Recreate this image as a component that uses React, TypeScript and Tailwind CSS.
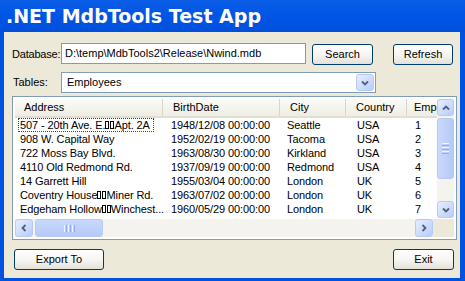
import React from "react";

type Dir = "up" | "down" | "left" | "right";

const chevronPaths: Record<Dir, string> = {
  up: "M2 6.5 L5 3.5 L8 6.5",
  down: "M2 3.5 L5 6.5 L8 3.5",
  left: "M6.5 2 L3.5 5 L6.5 8",
  right: "M3.5 2 L6.5 5 L3.5 8",
};

const Chevron = ({ dir }: { dir: Dir }) => (
  <svg width="10" height="10" viewBox="0 0 10 10">
    <path d={chevronPaths[dir]} fill="none" stroke="#4D6185" strokeWidth="1.8" />
  </svg>
);

const ScrollBtn = ({ dir, className = "" }: { dir: Dir; className?: string }) => (
  <div
    className={`flex items-center justify-center rounded-[3px] border border-[#B7CAF3] bg-linear-to-br from-[#E6EEFE] to-[#BACDF8] ${className}`}
  >
    <Chevron dir={dir} />
  </div>
);

const XpButton = ({ label, className = "" }: { label: string; className?: string }) => (
  <div
    className={`h-[21px] flex items-center justify-center rounded-[3px] border border-[#003C74] bg-linear-to-b from-white via-[#F7F6F2] to-[#E3E1D9] text-[11px] text-black ${className}`}
  >
    {label}
  </div>
);

// CR/LF shown as empty boxes by the list view
const Crlf = () => (
  <span className="inline-flex gap-[1px] align-[-1px]">
    <span className="inline-block w-[4px] h-[8px] border border-black" />
    <span className="inline-block w-[4px] h-[8px] border border-black" />
  </span>
);

const columns = [
  { name: "Address", w: "w-[148px]", hp: "pl-[9px]", dp: "pl-[5px]" },
  { name: "BirthDate", w: "w-[117px]", hp: "pl-[10px]", dp: "pl-[8px]" },
  { name: "City", w: "w-[66px]", hp: "pl-[10px]", dp: "pl-[7px]" },
  { name: "Country", w: "w-[61px]", hp: "pl-[10px]", dp: "pl-[11px]" },
  { name: "Emp", w: "w-[30px]", hp: "pl-[7px]", dp: "pl-[8px]" },
];

const rows: React.ReactNode[][] = [
  [<>507 - 20th Ave. E.<Crlf />Apt. 2A</>, "1948/12/08 00:00:00", "Seattle", "USA", "1"],
  ["908 W. Capital Way", "1952/02/19 00:00:00", "Tacoma", "USA", "2"],
  ["722 Moss Bay Blvd.", "1963/08/30 00:00:00", "Kirkland", "USA", "3"],
  ["4110 Old Redmond Rd.", "1937/09/19 00:00:00", "Redmond", "USA", "4"],
  ["14 Garrett Hill", "1955/03/04 00:00:00", "London", "UK", "5"],
  [<>Coventry House<Crlf />Miner Rd.</>, "1963/07/02 00:00:00", "London", "UK", "6"],
  [<>Edgeham Hollow<Crlf />Winchest...</>, "1960/05/29 00:00:00", "London", "UK", "7"],
];

const App: React.FC = () => {
  return (
    <div className="w-[465px] h-[281px] flex flex-col bg-[#0053E1] font-['Liberation_Sans',Arial,sans-serif] text-[11px] text-black overflow-hidden">
      {/* TITLE BAR */}
      <div className="h-[32px] shrink-0 flex items-center px-[6px] bg-linear-to-b from-[#0A5DE6] via-[#0055E5] to-[#0050DC]">
        <span className="text-white font-bold text-[19px] font-['DejaVu_Sans',sans-serif]">
          .NET MdbTools Test App
        </span>
      </div>

      {/* BODY */}
      <div className="flex-1 ml-[4px] mr-[5px] mb-[3px] bg-[#ECE9D8] flex flex-col pt-[11px]">
        {/* database row */}
        <div className="flex items-start h-[21px]">
          <span className="w-[57px] pl-[8px] pt-[3px] tracking-[-0.2px]">Database:</span>
          <div className="w-[245px] h-[21px] bg-white border border-[#7F9DB9] flex items-center pl-[3px]">
            D:\temp\MdbTools2\Release\Nwind.mdb
          </div>
          <XpButton label="Search" className="w-[61px] ml-[6px] mt-[1px]" />
          <XpButton label="Refresh" className="w-[60px] ml-[20px] mt-[1px]" />
        </div>

        {/* tables row */}
        <div className="flex items-start h-[21px] mt-[8px]">
          <span className="w-[57px] pl-[9px] pt-[2px]">Tables:</span>
          <div className="w-[315px] h-[21px] bg-white border border-[#7F9DB9] flex items-center justify-between pl-[5px] pr-[1px]">
            <span>Employees</span>
            <ScrollBtn dir="down" className="w-[18px] h-[17px]" />
          </div>
        </div>

        {/* list view */}
        <div className="ml-[8px] mt-[3px] w-[445px] h-[144px] border border-[#7F9DB9] bg-white p-[2px] flex flex-col">
          <div className="flex h-[119px]">
            <div className="flex-1 flex flex-col overflow-hidden">
              <div className="flex h-[19px] shrink-0 bg-linear-to-b from-[#FBFBF8] to-[#EEEDE4] border-b-[2px] border-[#E2DFD1]">
                {columns.map((c, i) => (
                  <div
                    key={c.name}
                    className={`${c.w} shrink-0 h-full flex items-center whitespace-nowrap ${c.hp} ${
                      i < columns.length - 1 ? "border-r border-[#D9D6C8]" : ""
                    }`}
                  >
                    {c.name}
                  </div>
                ))}
              </div>
              {rows.map((r, ri) => (
                <div key={ri} className="flex h-[14px] shrink-0 tracking-[-0.1px]">
                  {r.map((cell, ci) => (
                    <div
                      key={ci}
                      className={`${columns[ci].w} shrink-0 h-full flex items-center whitespace-nowrap ${columns[ci].dp}`}
                    >
                      {ri === 0 && ci === 0 ? (
                        <span className="h-[14px] flex items-center pl-[1px] pr-[3px] -ml-[2px] border border-dotted border-[#444]">
                          {cell}
                        </span>
                      ) : (
                        cell
                      )}
                    </div>
                  ))}
                </div>
              ))}
            </div>

            {/* vertical scrollbar */}
            <div className="w-[17px] shrink-0 flex flex-col bg-[#F4F3EE]">
              <ScrollBtn dir="up" className="h-[17px] shrink-0" />
              <div className="mt-[2px] h-[61px] rounded-[3px] border border-[#B7CAF3] bg-linear-to-r from-[#C9D8FC] to-[#B6CAF8] flex flex-col items-center justify-center gap-[1px]">
                <div className="w-[7px] h-[1px] bg-[#EEF3FF]" />
                <div className="w-[7px] h-[1px] bg-[#8DABEF]" />
                <div className="w-[7px] h-[1px] bg-[#EEF3FF]" />
                <div className="w-[7px] h-[1px] bg-[#8DABEF]" />
                <div className="w-[7px] h-[1px] bg-[#EEF3FF]" />
                <div className="w-[7px] h-[1px] bg-[#8DABEF]" />
              </div>
              <div className="flex-1" />
              <ScrollBtn dir="down" className="h-[17px] shrink-0" />
            </div>
          </div>

          {/* horizontal scrollbar */}
          <div className="flex flex-1 items-end">
            <div className="flex-1 h-[18px] flex bg-[#F4F3EE]">
              <ScrollBtn dir="left" className="w-[18px] h-full shrink-0" />
              <div className="ml-[2px] w-[68px] h-full rounded-[3px] border border-[#B7CAF3] bg-linear-to-b from-[#C9D8FC] to-[#B6CAF8] flex items-center justify-center gap-[1px]">
                <div className="w-[1px] h-[7px] bg-[#EEF3FF]" />
                <div className="w-[1px] h-[7px] bg-[#8DABEF]" />
                <div className="w-[1px] h-[7px] bg-[#EEF3FF]" />
                <div className="w-[1px] h-[7px] bg-[#8DABEF]" />
                <div className="w-[1px] h-[7px] bg-[#EEF3FF]" />
                <div className="w-[1px] h-[7px] bg-[#8DABEF]" />
              </div>
              <div className="flex-1" />
              <ScrollBtn dir="right" className="w-[18px] h-full shrink-0" />
            </div>
            <div className="w-[21px] h-[18px] bg-[#ECE9D8]" />
          </div>
        </div>

        {/* bottom buttons */}
        <div className="flex justify-between mt-[9px] ml-[10px] mr-[6px]">
          <XpButton label="Export To" className="w-[90px]" />
          <XpButton label="Exit" className="w-[61px]" />
        </div>
      </div>
    </div>
  );
};

export default App;
